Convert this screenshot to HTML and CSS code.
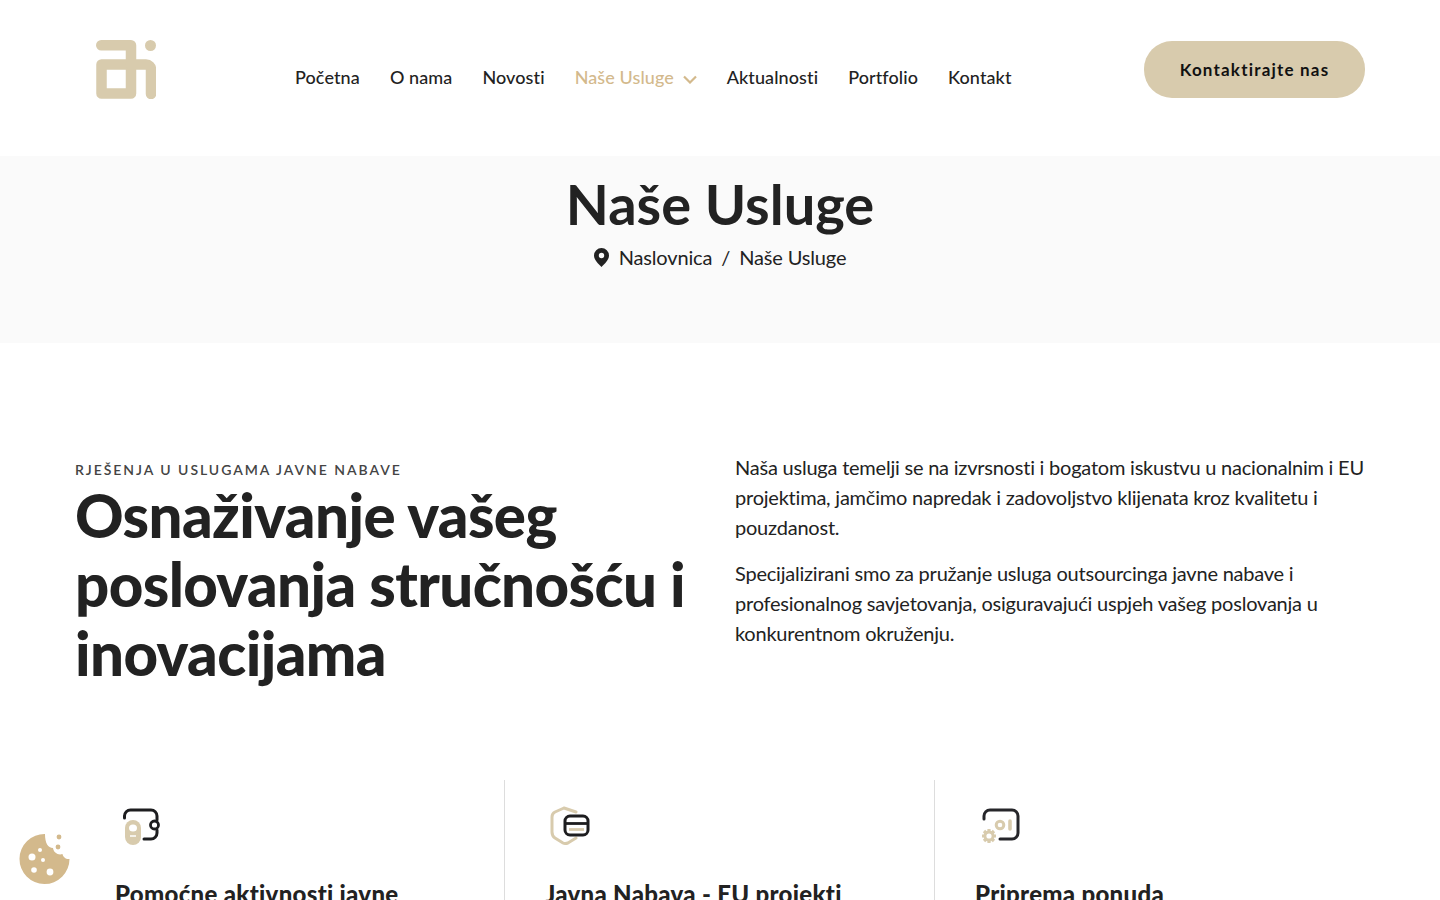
FILE: index.html
```html
<!DOCTYPE html>
<html lang="hr">
<head>
<meta charset="UTF-8">
<meta name="viewport" content="width=device-width, initial-scale=1.0">
<title>Naše Usluge</title>
<link rel="stylesheet" href="styles.css">
</head>
<body>

<header class="header">
    <a class="logo" href="#">
        <svg width="60" height="59" viewBox="0 0 60 59">
            <path d="M5.250 5.250H35V53.500H5.500V24.500H35" fill="none" stroke="#d8cbad" stroke-width="10.500" stroke-linecap="round" stroke-linejoin="round"/>
            <path d="M35 24.500H50a5 5 0 0 1 5 5V54" fill="none" stroke="#d8cbad" stroke-width="10.500" stroke-linecap="round"/>
            <circle cx="54.500" cy="5.500" r="5.500" fill="#d8cbad"/>
        </svg>
    </a>
    <nav class="nav">
        <a href="#">Početna</a>
        <a href="#">O nama</a>
        <a href="#">Novosti</a>
        <a href="#" class="active">Naše Usluge
            <svg width="14" height="9" viewBox="0 0 14 9"><path d="M1 1.500L7 7.500L13 1.500" fill="none" stroke="#d3b98c" stroke-width="2.200"/></svg>
        </a>
        <a href="#">Aktualnosti</a>
        <a href="#">Portfolio</a>
        <a href="#">Kontakt</a>
    </nav>
    <a class="header-btn" href="#">Kontaktirajte nas</a>
</header>

<section class="banner">
    <h1>Naše Usluge</h1>
    <p class="crumbs">
        <svg width="15" height="19" viewBox="0 0 15 19"><path fill-rule="evenodd" d="M7.500 0A7.500 7.500 0 0 0 0 7.500C0 12 4.500 16 7.500 19C10.500 16 15 12 15 7.500A7.500 7.500 0 0 0 7.500 0ZM7.500 4.800a2.700 2.700 0 1 1 0 5.400a2.700 2.700 0 0 1 0-5.400Z" fill="#222"/></svg>
        <span>Naslovnica</span><span>/</span><span>Naše Usluge</span>
    </p>
</section>

<main>
    <section class="intro">
        <div>
            <p class="eyebrow">Rješenja u uslugama javne nabave</p>
            <h2>Osnaživanje vašeg poslovanja stručnošću i inovacijama</h2>
        </div>
        <div class="intro-text">
            <p>Naša usluga temelji se na izvrsnosti i bogatom iskustvu u nacionalnim i EU projektima, jamčimo napredak i zadovoljstvo klijenata kroz kvalitetu i pouzdanost.</p>
            <p>Specijalizirani smo za pružanje usluga outsourcinga javne nabave i profesionalnog savjetovanja, osiguravajući uspjeh vašeg poslovanja u konkurentnom okruženju.</p>
        </div>
    </section>

    <section class="services">
        <div class="service">
            <svg width="40" height="40" viewBox="0 0 40 40" fill="none">
                <path d="M4.500 13V11a6 6 0 0 1 6-6H31a6 6 0 0 1 6 6v4M37 25v3a6 6 0 0 1-6 6H24" stroke="#1d1d1f" stroke-width="3" stroke-linecap="round"/>
                <circle cx="34.500" cy="20" r="4" stroke="#1d1d1f" stroke-width="2.800"/>
                <path d="M13 15a8 8 0 0 1 8 8v9a8 8 0 0 1-16 0v-9a8 8 0 0 1 8-8Z" fill="#d8cbad"/>
                <ellipse cx="13" cy="23" rx="4" ry="3.500" fill="#fff"/>
                <path d="M10 31H16" stroke="#fff" stroke-width="1.500"/>
            </svg>
            <h3>Pomoćne aktivnosti javne nabave</h3>
        </div>
        <div class="service">
            <svg width="40" height="40" viewBox="0 0 40 40" fill="none">
                <path d="M14 3L26 7M14 3L5 7Q2 8.500 2 12V27Q2 31 5 33L13 38Q15 39 18 38L26 33" stroke="#d8cbad" stroke-width="3" stroke-linecap="round"/>
                <rect x="15" y="11" width="23" height="19" rx="5" fill="#fff" stroke="#1d1d1f" stroke-width="3"/>
                <path d="M16 18.500H37" stroke="#1d1d1f" stroke-width="2.800"/>
                <path d="M19 24.500H34" stroke="#d8cbad" stroke-width="2.800"/>
            </svg>
            <h3>Javna Nabava - EU projekti</h3>
        </div>
        <div class="service">
            <svg width="40" height="40" viewBox="0 0 40 40" fill="none">
                <path d="M4 14V11a6 6 0 0 1 6-6H32a6 6 0 0 1 6 6V28a6 6 0 0 1-6 6H20" stroke="#26262a" stroke-width="3" stroke-linecap="round"/>
                <circle cx="20" cy="20" r="3.800" stroke="#d8cbad" stroke-width="3"/>
                <path d="M30 16V24" stroke="#d8cbad" stroke-width="3.600" stroke-linecap="round"/>
                <path d="M9 24V38M2 31H16M4 26L14 36M14 26L4 36" stroke="#d8cbad" stroke-width="3.200"/>
                <circle cx="9" cy="31" r="5.500" fill="#d8cbad"/>
                <circle cx="9" cy="31" r="2.600" fill="#fff"/>
            </svg>
            <h3>Priprema ponuda</h3>
        </div>
    </section>
</main>

<button class="cookie" aria-label="Kolačići">
    <svg width="52" height="54" viewBox="0 0 52 54">
        <path fill-rule="evenodd" fill="#d3b98c" d="M26 3A25 25 0 1 0 50.500 28C47 28.500 44 26 43.500 23C39 24.500 34.500 21.500 34 17C29 17 26 12 26 3Z"/>
        <circle cx="13" cy="26" r="3.500" fill="#fff"/><circle cx="21" cy="19" r="2" fill="#fff"/>
        <circle cx="24" cy="29" r="2" fill="#fff"/><circle cx="15" cy="39" r="2.800" fill="#fff"/>
        <circle cx="31" cy="41" r="3.400" fill="#fff"/>
        <circle cx="40" cy="6" r="2.400" fill="#d3b98c"/><circle cx="39" cy="16" r="2.400" fill="#d3b98c"/>
    </svg>
</button>

</body>
</html>
```

FILE: styles.css
```css
html, body {
    height: 900px;
    overflow: hidden;
}

body {
    font-family: "Lato", "Noto Sans", Arial, sans-serif;
    color: #222;
    background-color: #fff;
    margin: 0;
}

a {
    color: inherit;
    text-decoration: none;
}

/* header */
.header {
    display: flex;
    align-items: flex-start;
    height: 156px;
    box-sizing: border-box;
    padding: 40px 75px 0 96px;
}

.logo {
    display: block;
    width: 199px;
    height: 59px;
}

.nav {
    display: flex;
    gap: 30px;
    padding-top: 24px;
    font-size: 18px;
    line-height: 26px;
    font-weight: 500;
    letter-spacing: 0.1px;
}

.nav svg {
    margin-left: 4px;
}

.nav .active {
    color: #d3b98c;
}

.header-btn {
    margin: 1px 0 0 auto;
    width: 221px;
    height: 57px;
    line-height: 57px;
    text-align: center;
    border-radius: 28px;
    background-color: #d8cbad;
    color: #111;
    font-size: 17px;
    font-weight: 700;
    letter-spacing: 1.2px;
}

/* banner */
.banner {
    height: 187px;
    box-sizing: border-box;
    padding-top: 13px;
    background-color: #fafafa;
    text-align: center;
}

.banner h1 {
    margin: 0;
    font-size: 56px;
    line-height: 70px;
    font-weight: 700;
}

.crumbs {
    display: flex;
    justify-content: center;
    align-items: center;
    gap: 9px;
    margin: 3px 0 0;
    font-size: 20px;
    line-height: 30px;
    font-weight: 400;
    letter-spacing: -0.15px;
}

.crumbs svg {
    margin-right: 1px;
}

/* intro */
.intro {
    display: grid;
    grid-template-columns: 660px 630px;
    padding: 110px 75px 0;
    height: 327px;
}

.eyebrow {
    margin: 8px 0 0;
    font-size: 14px;
    line-height: 18px;
    font-weight: 600;
    letter-spacing: 1.95px;
    text-transform: uppercase;
    color: #444;
}

h2 {
    margin: 2px 0 0;
    font-size: 60px;
    line-height: 69px;
    font-weight: 900;
    letter-spacing: -0.6px;
}

.intro-text {
    margin-top: -1px;
    font-size: 20px;
    line-height: 30px;
    font-weight: 400;
    letter-spacing: -0.22px;
}

.intro-text p {
    margin: 0 0 16px;
}

/* services */
.services {
    display: grid;
    grid-template-columns: repeat(3, 430px);
    padding: 0 75px;
}

.service {
    padding: 25px 40px 0;
    height: 200px;
    border-right: 1px solid #ddd;
}

.service:last-child {
    border-right: 0;
}

.service svg {
    display: block;
    margin-left: 5px;
}

.service h3 {
    margin: 33px 0 0;
    font-size: 24px;
    line-height: 32px;
    font-weight: 900;
    letter-spacing: 0.3px;
}

/* cookie */
.cookie {
    position: fixed;
    left: 19px;
    bottom: 15px;
    width: 52px;
    height: 54px;
    padding: 0;
    border: 0;
    background: none;
}
```
